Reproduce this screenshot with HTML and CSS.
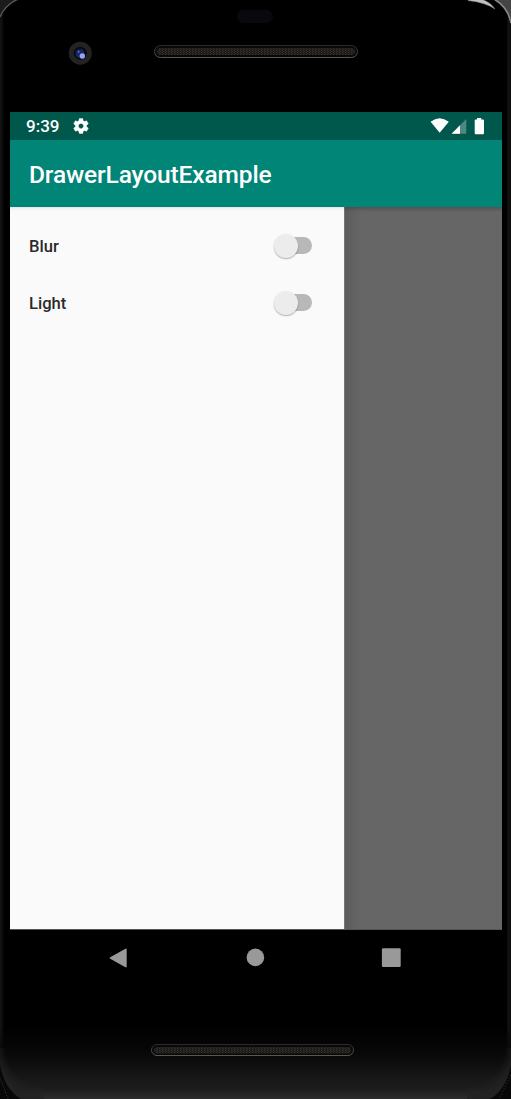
FILE: index.html
```
<!DOCTYPE html>
<html lang="en">
<head>
<meta charset="utf-8">
<title>DrawerLayoutExample</title>
<link rel="stylesheet" href="styles.css">
</head>
<body>
<div class="phone">
  <svg class="bezel-top" viewBox="0 0 511 112" aria-hidden="true">
    <defs>
      <pattern id="mesh" width="3" height="2" patternUnits="userSpaceOnUse">
        <rect width="3" height="2" fill="#1d1b17"/>
        <rect width="1" height="1" fill="#38342d"/>
        <rect x="1" y="1" width="1" height="1" fill="#302d27"/>
      </pattern>
      <linearGradient id="rim" x1="0" y1="0" x2="0" y2="1">
        <stop offset="0" stop-color="#2b2b2b"/>
        <stop offset="1" stop-color="#5a5852"/>
      </linearGradient>
      <filter id="soft" x="-50%" y="-50%" width="200%" height="200%"><feGaussianBlur stdDeviation="0.5"/></filter>
    </defs>
    <path d="M0 0H19Q5 5 0 17Z" fill="#1b1b1b"/>
    <path d="M18 -1Q5 5 0 17" fill="none" stroke="#5c5c5c" stroke-width="1.2"/>
    <path d="M494 0H511V22Q507 8 494 0Z" fill="#454543"/>
    <path d="M494 -1Q508 7 511 23" fill="none" stroke="#858585" stroke-width="1.6"/>
    <path d="M468 -.5H482Q490 2 495 9Q486 2.500 468 .5Z" fill="#bfc2c2" stroke="#8c9090" stroke-width=".5"/>
    <rect x="237" y="10" width="36" height="13" rx="6.5" fill="#08090e"/>
    <circle cx="80.3" cy="53.2" r="11.5" fill="#242323"/>
    <circle cx="80.3" cy="53.2" r="6.5" fill="#080a14"/>
    <circle cx="80" cy="53.5" r="4.5" fill="#17265f" filter="url(#soft)"/>
    <circle cx="82.3" cy="56" r="2.7" fill="#96a5f3" filter="url(#soft)"/>
    <circle cx="78.6" cy="51.8" r="1" fill="#5575dc"/>
    <rect x="154.5" y="45.5" width="203" height="12" rx="6" fill="#090909" stroke="url(#rim)"/>
    <rect x="157" y="48" width="198" height="7" rx="3.5" fill="url(#mesh)"/>
  </svg>

  <div class="screen">
    <header class="status-bar">
      <span class="clock">9:39</span>
      <svg class="gear" viewBox="0 0 24 24"><path d="M19.43 12.98c.04-.32.07-.64.07-.98s-.03-.66-.07-.98l2.11-1.65c.19-.15.24-.42.12-.64l-2-3.46c-.12-.22-.39-.3-.61-.22l-2.49 1c-.52-.4-1.08-.73-1.69-.98l-.38-2.65C14.46 2.18 14.25 2 14 2h-4c-.25 0-.46.18-.49.42l-.38 2.65c-.61.25-1.17.59-1.69.98l-2.49-1c-.23-.09-.49 0-.61.22l-2 3.46c-.13.22-.07.49.12.64l2.11 1.65c-.04.32-.07.65-.07.98s.03.66.07.98l-2.11 1.65c-.19.15-.24.42-.12.64l2 3.46c.12.22.39.3.61.22l2.49-1c.52.4 1.08.73 1.69.98l.38 2.65c.03.24.24.42.49.42h4c.25 0 .46-.18.49-.42l.38-2.65c.61-.25 1.17-.59 1.69-.98l2.49 1c.23.09.49 0 .61-.22l2-3.46c.12-.22.07-.49-.12-.64l-2.11-1.65zM12 15.5c-1.93 0-3.5-1.57-3.5-3.5s1.57-3.5 3.5-3.5 3.5 1.57 3.5 3.5-1.57 3.5-3.5 3.5z"/></svg>
      <svg class="indicators" viewBox="0 0 56 18">
        <path d="M.6 4.8Q9.6-2.4 18.8 4.8L9.7 15.8Z"/>
        <path d="M21.6 16.7L36.3 2V16.7Z" opacity=".3"/>
        <path d="M21.6 16.7L30 8.3V16.7Z"/>
        <path d="M44.7 3.5Q44.7 2.5 45.7 2.5H47V1H51.2V2.5H53Q54 2.5 54 3.5V16.2Q54 17.2 53 17.2H45.7Q44.7 17.2 44.7 16.2Z"/>
      </svg>
    </header>
    <div class="app-bar"><h1>DrawerLayoutExample</h1></div>
    <main class="content">
      <div class="drawer">
        <label class="row"><span class="label">Blur</span><span class="switch"><span class="thumb"></span></span></label>
        <label class="row"><span class="label">Light</span><span class="switch"><span class="thumb"></span></span></label>
      </div>
      <div class="scrim"></div>
    </main>
  </div>

  <nav class="nav-bar">
    <svg viewBox="0 0 20 20"><path d="M2.2 9.3L17 .9Q18.7 0 18.7 1.5V18.5Q18.7 20 17 19.1L2.2 10.7Q.8 10 2.2 9.3Z"/></svg>
    <svg viewBox="0 0 20 20"><circle cx="10.4" cy="9.4" r="8.8"/></svg>
    <svg viewBox="0 0 20 20"><rect x=".9" y=".2" width="18.8" height="18.8" rx="1.2"/></svg>
  </nav>

  <svg class="bezel-bottom" viewBox="0 0 511 113" aria-hidden="true">
    <defs>
      <radialGradient id="cornerLeft" gradientUnits="userSpaceOnUse" cx="44" cy="62" r="51">
        <stop offset=".74" stop-color="#222" stop-opacity="0"/>
        <stop offset="1" stop-color="#222"/>
      </radialGradient>
      <radialGradient id="cornerRight" gradientUnits="userSpaceOnUse" cx="467" cy="62" r="51">
        <stop offset=".74" stop-color="#222" stop-opacity="0"/>
        <stop offset="1" stop-color="#222"/>
      </radialGradient>
    </defs>
    <path d="M0 62H44V113H0Z" fill="url(#cornerLeft)"/>
    <path d="M467 62H511V113H467Z" fill="url(#cornerRight)"/>
    <path d="M0 79Q5 104 21 113H0Z" fill="#080808"/>
    <path d="M511 79Q506 104 490 113H511Z" fill="#080808"/>
    <path d="M0 92L8 113M511 89L499 113" stroke="#3b3b3b" stroke-dasharray="1 2"/>
    <rect x="151.5" y="58.5" width="202" height="11" rx="5.5" fill="#090909" stroke="url(#rim)"/>
    <rect x="154" y="61" width="197" height="6.5" rx="3" fill="url(#mesh)"/>
  </svg>
</div>
</body>
</html>
```
FILE: styles.css
```
* { box-sizing: border-box; }

body {
  margin: 0;
  background: #000;
  font-family: Roboto, "Liberation Sans", sans-serif;
}

.phone {
  display: flex;
  flex-direction: column;
  width: 511px;
  height: 1099px;
  overflow: hidden;
  background:
    linear-gradient(90deg, #141414, #0e0e0e 2px, #000 4px, transparent 5px, transparent 505px, #000 506px, #151412 509px, #080808 511px),
    #000;
}

.bezel-top { display: block; width: 511px; height: 112px; flex: none; }

.screen {
  display: flex;
  flex-direction: column;
  width: 492px;
  height: 818px;
  margin-left: 10px;
  flex: none;
}

.status-bar {
  display: flex;
  align-items: center;
  height: 28px;
  padding: 0 16px;
  background: #00574b;
  color: #fff;
}

.clock { width: 46px; font-size: 17px; font-weight: 500; line-height: 28px; }
.gear { width: 18px; height: 18px; fill: #fff; stroke: #fff; stroke-width: .5; }
.indicators { width: 56px; height: 18px; margin-left: auto; fill: #fff; }

.app-bar {
  display: flex;
  align-items: center;
  height: 67px;
  padding: 2px 19px 0;
  background: #008577;
  color: #fff;
}

.app-bar h1 { margin: 0; font-size: 24.5px; font-weight: 500; line-height: 32px; letter-spacing: -.13px; }

.content {
  display: flex;
  flex: 1;
  border-bottom: 1px solid #555;
  background: #666;
}

.drawer {
  width: 334px;
  padding-top: 10px;
  background: linear-gradient(#e4e4e4, #f5f5f5 2px, #fafafa 5px);
}

.row {
  display: flex;
  align-items: center;
  justify-content: space-between;
  height: 57px;
  padding: 0 32px 0 19px;
}

.label {
  padding-top: 2px;
  color: #2a2a2a;
  font-size: 16.6px;
  font-weight: 500;
}

.switch {
  display: flex;
  align-items: center;
  width: 36px;
  height: 17px;
  border-radius: 9px;
  background: #b8b8b8;
}

.thumb {
  width: 24px;
  height: 24px;
  margin-left: -2.5px;
  flex: none;
  border-radius: 50%;
  background: #ececec;
  box-shadow: 0 1px 1.5px rgba(0, 0, 0, .3);
}

.scrim {
  flex: 1;
  background:
    linear-gradient(rgba(0, 0, 0, .18), transparent 5px),
    linear-gradient(90deg, #777 0, #777 1px, #5c5c5c 1px, #616161 9px, #666 17px);
}

.nav-bar {
  display: flex;
  justify-content: space-between;
  align-items: center;
  height: 56px;
  padding: 0 110px 0 108px;
  flex: none;
}

.nav-bar svg { width: 20px; height: 20px; fill: #999; }

.bezel-bottom {
  display: block;
  width: 511px;
  height: 113px;
  flex: none;
  background: linear-gradient(transparent 40px, #080808 68px, #161616 90px, #1c1c1c 103px, #2c2c2c 113px);
}
```
